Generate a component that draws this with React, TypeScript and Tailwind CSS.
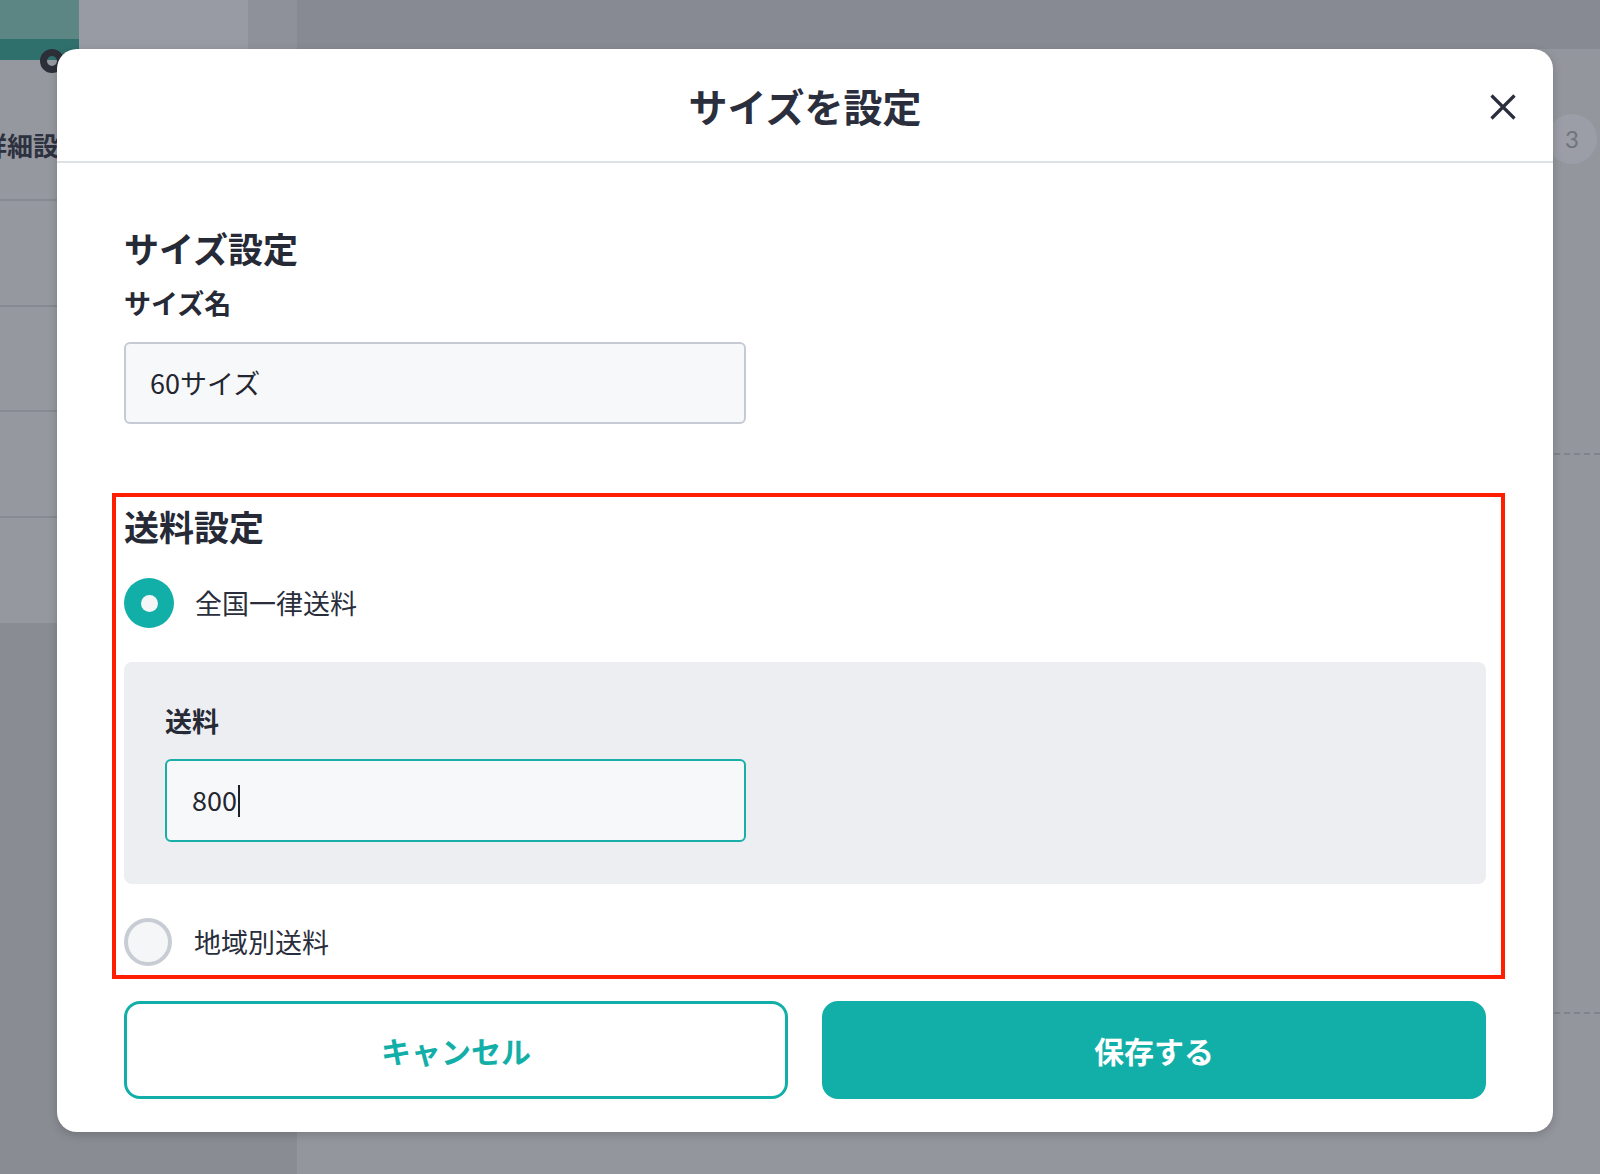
import React from 'react';

function Background() {
  return (
    <>
      <aside className="relative w-[297px] shrink-0 flex flex-col bg-[#8a8c94]">
        <div className="flex h-[60px] bg-[#95989f]">
          <div className="w-[79px] flex flex-col">
            <div className="h-[39px] bg-[#5b8684]" />
            <div className="h-[21px] bg-[#2f6f6c]" />
          </div>
          <div className="w-[169px] h-[49px] bg-[#989ba3]" />
          <div className="flex-1 h-[49px] bg-[#8e9199]" />
        </div>
        {/* avatar ring peeking out from behind the dialog */}
        <div className="absolute left-[40px] top-[49px] w-[24px] h-[24px] rounded-full border-[7px] border-[#2c2e38]" />
        <div className="flex flex-col bg-[#95989f]">
          <div className="h-[141px] border-b-2 border-[#878a92] pt-[67px] overflow-hidden">
            <div className="-ml-[19px] whitespace-nowrap text-[26px] leading-[36px] font-bold text-[#2d3140]">詳細設定</div>
          </div>
          <div className="h-[106px] border-b-2 border-[#878a92]" />
          <div className="h-[105px] border-b-2 border-[#878a92]" />
          <div className="h-[106px] border-b-2 border-[#878a92]" />
          <div className="h-[105px]" />
        </div>
      </aside>
      <main className="flex-1 flex flex-col">
        <div className="h-[49px] shrink-0 bg-[#878a93]" />
        <div className="flex-1 flex flex-col">
          <div className="flex justify-end pr-[3px] pt-[65px]">
            <div className="w-[50px] h-[50px] rounded-full bg-[#9b9ea6] flex items-center justify-center text-[24px] text-[#70747e] font-['Lato',sans-serif]">
              3
            </div>
          </div>
          <div className="mt-[289px] border-t-2 border-dashed border-[#80838c]" />
          <div className="mt-[557px] border-t-2 border-dashed border-[#80838c]" />
        </div>
      </main>
    </>
  );
}

function CloseIcon() {
  return (
    <svg width="26" height="26" viewBox="0 0 26 26" fill="none">
      <path d="M1.5 1.5L24.5 24.5M24.5 1.5L1.5 24.5" stroke="#2b2f3d" strokeWidth="3.2" />
    </svg>
  );
}

function Modal() {
  return (
    <div className="absolute left-[57px] top-[49px] w-[1496px] rounded-[20px] bg-white shadow-[0_3px_10px_rgba(0,0,0,0.18)] flex flex-col text-[#262a36]">
      <div className="relative h-[114px] border-b-2 border-[#dde0e5] flex items-center justify-center">
        <h1 className="text-[39px] leading-[52px] font-bold text-[#2b2f3d]">サイズを設定</h1>
        <button className="absolute right-[37px] top-[45px] w-[26px] h-[26px]">
          <CloseIcon />
        </button>
      </div>

      <div className="flex flex-col px-[67px] pt-[61px] pb-[33px]">
        <h2 className="text-[35px] leading-[48px] font-bold">サイズ設定</h2>
        <div className="mt-[13px] text-[27px] leading-[36px] font-bold">サイズ名</div>
        <div className="mt-[21px] w-[622px] h-[82px] border-2 border-[#c6cbd3] rounded-[6px] bg-[#f7f8fa] px-[24px] flex items-center text-[27px] text-[#23262f]">
          60サイズ
        </div>

        <div className="mt-[69px] -ml-[12px] -mr-[19px] border-4 border-[#ff1e00] pl-[8px] pr-[15px] pt-[5px] pb-[9px] flex flex-col">
          <h2 className="text-[35px] leading-[48px] font-bold">送料設定</h2>

          <div className="mt-[28px] h-[50px] flex items-center gap-[21px]">
            <div className="w-[50px] h-[50px] rounded-full bg-[#12afa9] flex items-center justify-center">
              <div className="w-[17px] h-[17px] rounded-full bg-[#f5f6f8]" />
            </div>
            <span className="text-[27px] leading-[36px] text-[#2a2e3c]">全国一律送料</span>
          </div>

          <div className="mt-[34px] rounded-[8px] bg-[#edeef1] pl-[41px] pt-[41px] pb-[42px]">
            <div className="text-[27px] leading-[36px] font-bold">送料</div>
            <div className="mt-[20px] w-[581px] h-[83px] border-2 border-[#19aea8] rounded-[6px] bg-[#f7f8fa] px-[25px] flex items-center text-[27px] text-[#23262f]">
              800
              <span className="ml-[1px] w-[2px] h-[32px] bg-[#1f2128]" />
            </div>
          </div>

          <div className="mt-[34px] h-[48px] flex items-center gap-[22px]">
            <div className="w-[48px] h-[48px] rounded-full border-4 border-[#c8ccd4] bg-[#f5f6f8]" />
            <span className="text-[27px] leading-[36px] text-[#2a2e3c]">地域別送料</span>
          </div>
        </div>

        <div className="mt-[22px] grid grid-cols-2 gap-[34px] h-[98px]">
          <button className="rounded-[16px] border-[3px] border-[#12afa9] bg-white text-[30px] font-bold text-[#12afa9]">
            キャンセル
          </button>
          <button className="rounded-[16px] bg-[#12afa9] text-[30px] font-bold text-white">
            保存する
          </button>
        </div>
      </div>
    </div>
  );
}

export default function App() {
  return (
    <div className="relative w-[1600px] h-[1174px] overflow-hidden flex bg-[#94969e] font-['Noto_Sans_CJK_JP',sans-serif]">
      <Background />
      <Modal />
    </div>
  );
}
